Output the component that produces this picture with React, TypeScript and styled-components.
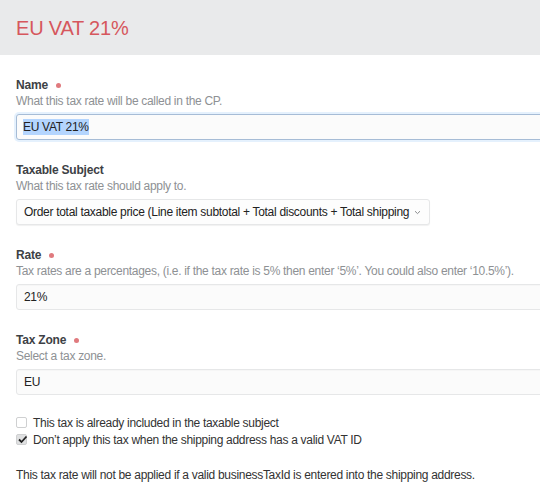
import React from "react";
import styled, { createGlobalStyle } from "styled-components";

const Global = createGlobalStyle`
  html, body { margin: 0; padding: 0; background: #fff; overflow: hidden; }
  body { font-family: "Liberation Sans", Arial, Helvetica, sans-serif; font-size: 12px; letter-spacing: -0.3px; color: #333; }
`;

const Page = styled.div`
  width: 540px;
  height: 500px;
  overflow: hidden;
`;

const Header = styled.header`
  height: 55px;
  background: #e9eaeb;
  display: flex;
  align-items: center;
  padding: 0 16px;
  box-sizing: border-box;
`;

const Title = styled.h1`
  margin: 0;
  font-size: 20px;
  font-weight: 400;
  color: #d6575d;
  letter-spacing: -0.2px;
  padding-top: 1px;
`;

const Form = styled.div`
  padding: 22px 16px 0;
  display: flex;
  flex-direction: column;
`;

const Field = styled.div`
  display: flex;
  flex-direction: column;
  margin-bottom: 22px;
`;

const Label = styled.div`
  font-weight: 700;
  color: #3d4145;
  line-height: 16px;
  letter-spacing: -0.2px;
  display: flex;
  align-items: center;
  gap: 6px;
`;

const Required = styled.span`
  width: 5px;
  height: 5px;
  border-radius: 50%;
  background: #e07a7e;
  display: inline-block;
  margin-left: 2px;
`;

const Desc = styled.div`
  color: #8e9194;
  line-height: 16px;
  margin-bottom: 5px;
  white-space: nowrap;
`;

const Input = styled.div<{ $focused?: boolean }>`
  box-sizing: border-box;
  height: 26px;
  width: 560px;
  border: 1px solid ${(p) => (p.$focused ? "#a6bcd6" : "#e6e7e8")};
  border-radius: 3px;
  background: #fbfbfb;
  box-shadow: ${(p) =>
    p.$focused ? "0 0 0 2px rgba(180, 215, 250, 0.35)" : "inset 0 1px 0 rgba(0,0,0,0.02)"};
  display: flex;
  align-items: center;
  padding: 0 7px;
  color: #222;
  white-space: nowrap;
`;

const Selected = styled.span`
  background: #b4d5fe;
  padding: 1px 0;
  margin-left: -1px;
`;

const Select = styled(Input)`
  width: 414px;
  background: #fdfdfd;
  box-shadow: 0 1px 1px rgba(0,0,0,0.06);
  justify-content: space-between;
  padding-right: 8px;
`;

const Checks = styled.div`
  display: flex;
  flex-direction: column;
  margin-top: -3px;
  margin-bottom: 19px;
`;

const CheckRow = styled.label`
  display: flex;
  align-items: center;
  gap: 6px;
  height: 17px;
  color: #333;
`;

const Box = styled.span<{ $checked?: boolean }>`
  box-sizing: border-box;
  width: 11px;
  height: 11px;
  border: 1px solid #cfd0d1;
  border-radius: 2px;
  background: ${(p) => (p.$checked ? "#dfe0e1" : "#fff")};
  display: inline-flex;
  align-items: center;
  justify-content: center;
  position: relative;
`;

const Note = styled.p`
  margin: 0;
  color: #333;
  line-height: 16px;
  white-space: nowrap;
`;

const Chevron = () => (
  <svg width="7" height="5" viewBox="0 0 7 5">
    <path d="M1 1.2 L3.5 3.6 L6 1.2" fill="none" stroke="#8a8c8e" strokeWidth="1" />
  </svg>
);

const Tick = () => (
  <svg width="11" height="11" viewBox="0 0 11 11" style={{ position: "absolute", left: 0, top: -1 }}>
    <path d="M2 5.5 L4.5 8 L9.5 2.5" fill="none" stroke="#222" strokeWidth="1.8" />
  </svg>
);

export default function App() {
  return (
    <Page>
      <Global />
      <Header>
        <Title>EU VAT 21%</Title>
      </Header>
      <Form>
        <Field>
          <Label>
            Name <Required />
          </Label>
          <Desc>What this tax rate will be called in the CP.</Desc>
          <Input $focused>
            <Selected>EU VAT 21%</Selected>
          </Input>
        </Field>
        <Field>
          <Label>Taxable Subject</Label>
          <Desc>What this tax rate should apply to.</Desc>
          <Select>
            <span>Order total taxable price (Line item subtotal + Total discounts + Total shipping</span>
            <Chevron />
          </Select>
        </Field>
        <Field>
          <Label>
            Rate <Required />
          </Label>
          <Desc>
            Tax rates are a percentages, (i.e. if the tax rate is 5% then enter ‘5%’. You could also enter ‘10.5%’).
          </Desc>
          <Input>21%</Input>
        </Field>
        <Field>
          <Label>
            Tax Zone <Required />
          </Label>
          <Desc>Select a tax zone.</Desc>
          <Input>EU</Input>
        </Field>
        <Checks>
          <CheckRow>
            <Box />
            This tax is already included in the taxable subject
          </CheckRow>
          <CheckRow>
            <Box $checked>
              <Tick />
            </Box>
            Don’t apply this tax when the shipping address has a valid VAT ID
          </CheckRow>
        </Checks>
        <Note>This tax rate will not be applied if a valid businessTaxId is entered into the shipping address.</Note>
      </Form>
    </Page>
  );
}
